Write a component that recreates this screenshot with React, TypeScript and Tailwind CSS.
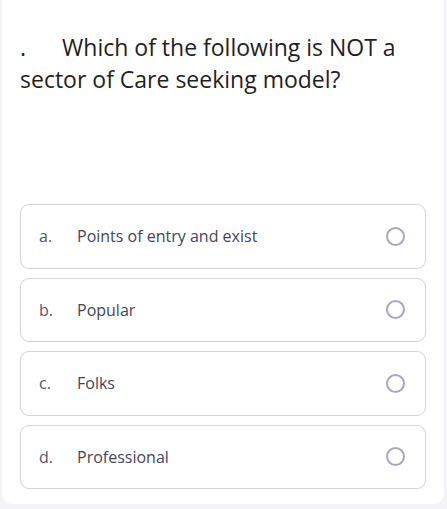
import React from 'react';

interface Choice {
  label: string;
  text: string;
}

const choices: Choice[] = [
  { label: 'a.', text: 'Points of entry and exist' },
  { label: 'b.', text: 'Popular' },
  { label: 'c.', text: 'Folks' },
  { label: 'd.', text: 'Professional' },
];

const ChoiceRow: React.FC<{ choice: Choice }> = ({ choice }) => (
  <button
    type="button"
    className="flex h-[64.5px] w-full items-center rounded-[9px] border border-[#d3d3da] bg-white pl-[18px] pr-[20px] text-left"
  >
    <span className="w-[38px] shrink-0 text-[16px] text-[#55556a]">{choice.label}</span>
    <span className="flex-1 text-[16px] text-[#45455a]">{choice.text}</span>
    <span className="h-[19px] w-[19px] shrink-0 rounded-full border-[2.5px] border-[#a8a7c0]" />
  </button>
);

export default function App() {
  return (
    <div
      className="min-h-[509px] bg-[#f4f4f8] pb-[6px] pl-[2px] pr-[3px]"
      style={{ fontFamily: '"Open Sans", "Noto Sans", sans-serif' }}
    >
      <div className="rounded-b-[10px] bg-white px-[18px] pb-[15px] pt-[31px]">
        <h2 className="text-[23px] font-normal leading-[32px] text-[#1f1f24]">
          <span className="mr-[36px]">.</span>
          Which of the following is NOT a sector of Care seeking model?
        </h2>

        <div className="mt-[109px] flex flex-col gap-[9px]">
          {choices.map((choice) => (
            <ChoiceRow key={choice.label} choice={choice} />
          ))}
        </div>
      </div>
    </div>
  );
}
